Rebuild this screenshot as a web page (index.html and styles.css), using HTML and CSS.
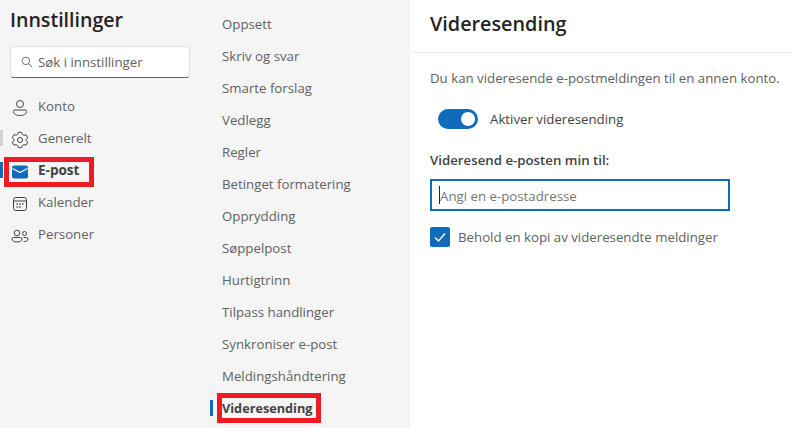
FILE: index.html
```html
<!DOCTYPE html>
<html lang="nb">
<head>
  <meta charset="UTF-8" />
  <title>Innstillinger</title>
  <link rel="stylesheet" href="styles.css">
</head>
<body>
  <div class="settings">

    <!-- Left column -->
    <aside class="sidebar">
      <h1 class="sidebar-title">Innstillinger</h1>
      <div class="search">
        <svg class="search-icon" viewBox="0 0 16 16" width="12" height="12" fill="none" stroke="#616161" stroke-width="1.200">
          <circle cx="6.500" cy="6.500" r="5"/>
          <path d="M10 10l5 5"/>
        </svg>
        <span>Søk i innstillinger</span>
      </div>
      <nav class="cat-list">
        <div class="cat">
          <svg viewBox="0 0 20 20" width="20" height="20" fill="none" stroke="#424242" stroke-width="1">
            <circle cx="10" cy="6" r="3.500"/>
            <path d="M3.500 13.500a1.500 1.500 0 0 1 1.500-1.500h10a1.500 1.500 0 0 1 1.500 1.500c0 2.800-3 4-6.500 4s-6.500-1.200-6.500-4z"/>
          </svg>
          <span>Konto</span>
        </div>
        <div class="cat cat-hover">
          <svg viewBox="0 0 20 20" width="20" height="20" fill="none" stroke="#424242" stroke-width="1">
            <circle cx="10" cy="10" r="2.500"/>
            <path d="M8.300 2.300h3.400l.6 2.200 1.500.9 2.200-.6 1.700 3-1.600 1.600v1.200l1.600 1.600-1.700 3-2.200-.6-1.500.9-.6 2.200H8.300l-.6-2.200-1.500-.9-2.200.6-1.700-3 1.600-1.600V9.200L2.300 7.600l1.700-3 2.200.6 1.500-.9z" stroke-linejoin="round"/>
          </svg>
          <span>Generelt</span>
        </div>
        <div class="cat cat-active">
          <svg viewBox="0 0 20 20" width="20" height="20">
            <rect x="2" y="3.500" width="16" height="13" rx="2" fill="#0f6cbd"/>
            <path d="M2.500 6.500 10 10.500l7.500-4" fill="none" stroke="#fff" stroke-width="1.200"/>
          </svg>
          <span>E-post</span>
        </div>
        <div class="cat">
          <svg viewBox="0 0 20 20" width="20" height="20" fill="none" stroke="#424242" stroke-width="1">
            <rect x="3.500" y="3.500" width="13" height="13" rx="2"/>
            <path d="M3.500 7h13"/>
            <path d="M6.500 10h1.400M9.300 10h1.400M12.100 10h1.400M6.500 13h1.400M9.300 13h1.400" stroke-width="1.400"/>
          </svg>
          <span>Kalender</span>
        </div>
        <div class="cat">
          <svg viewBox="0 0 20 20" width="20" height="20" fill="none" stroke="#424242" stroke-width="1">
            <circle cx="7" cy="7" r="2.800"/>
            <circle cx="14.500" cy="7.500" r="2"/>
            <path d="M2 13a1.500 1.500 0 0 1 1.500-1.500h7A1.500 1.500 0 0 1 12 13c0 2-2 3-5 3s-5-1-5-3z"/>
            <path d="M13.500 15.500c2.500.2 4.500-.7 4.500-2.500a1.500 1.500 0 0 0-1.500-1.500h-3"/>
          </svg>
          <span>Personer</span>
        </div>
      </nav>
      <div class="mark mark-epost"></div>
    </aside>

    <!-- Middle column -->
    <nav class="sub-list">
      <div class="sub">Oppsett</div>
      <div class="sub">Skriv og svar</div>
      <div class="sub">Smarte forslag</div>
      <div class="sub">Vedlegg</div>
      <div class="sub">Regler</div>
      <div class="sub">Betinget formatering</div>
      <div class="sub">Opprydding</div>
      <div class="sub">Søppelpost</div>
      <div class="sub">Hurtigtrinn</div>
      <div class="sub">Tilpass handlinger</div>
      <div class="sub">Synkroniser e-post</div>
      <div class="sub">Meldingshåndtering</div>
      <div class="sub sub-active">Videresending</div>
      <div class="mark mark-videre"></div>
    </nav>

    <!-- Right column -->
    <main class="panel">
      <header class="panel-head">
        <h2>Videresending</h2>
      </header>
      <div class="panel-body">
        <p class="intro">Du kan videresende e-postmeldingen til en annen konto.</p>
        <div class="toggle-row">
          <span class="toggle"><span class="knob"></span></span>
          <span>Aktiver videresending</span>
        </div>
        <div class="field-label">Videresend e-posten min til:</div>
        <div class="input"><span class="caret"></span><span class="placeholder">Angi en e-postadresse</span></div>
        <div class="check-row">
          <span class="check">
            <svg viewBox="0 0 20 20" width="20" height="20" fill="none" stroke="#fff" stroke-width="1.500">
              <path d="M5 10.500 8.500 14 15 6.500"/>
            </svg>
          </span>
          <span>Behold en kopi av videresendte meldinger</span>
        </div>
      </div>
    </main>

  </div>
</body>
</html>
```

FILE: styles.css
```css
*, *::before, *::after { box-sizing: border-box; }
html, body {
  margin: 0;
  height: 100%;
  overflow: hidden;
  font-family: "Open Sans", "Noto Sans", sans-serif;
  font-size: 13.25px;
  color: #424242;
  background: #fff;
}

.settings {
  display: flex;
  height: 428px;
}

/* ---------- left column ---------- */
.sidebar {
  position: relative;
  width: 210px;
  background: #f5f5f5;
  border-right: 1px solid #f0f0f0;
  padding: 0 0 0 10px;
}
.sidebar-title {
  margin: 0;
  height: 46px;
  line-height: 39px;
  font-size: 19.6px;
  font-weight: 600;
  color: #242424;
}
.search {
  display: flex;
  align-items: center;
  gap: 5px;
  width: 180px;
  height: 32px;
  padding-left: 10px;
  background: #fff;
  border: 1px solid #e0e0e0;
  border-bottom-color: #616161;
  border-radius: 4px;
  color: #616161;
}
.cat-list { margin-top: 12px; }
.cat {
  position: relative;
  display: flex;
  align-items: center;
  gap: 8px;
  height: 32px;
  color: #616161;
}
.cat svg { margin-top: 3px; }
.cat-hover::before,
.cat-active::before {
  content: "";
  position: absolute;
  left: -10px;
  top: 8px;
  width: 3px;
  height: 16px;
  background: #d1d1d1;
}
.cat-active::before { background: #0f6cbd; }
.cat-active { font-weight: 700; color: #424242; font-size: 13.5px; }

/* ---------- middle column ---------- */
.sub-list {
  position: relative;
  width: 200px;
  background: #f5f5f5;
  padding: 8px 0 0 12px;
}
.sub {
  position: relative;
  height: 32px;
  line-height: 32px;
  color: #616161;
}
.sub-active { font-weight: 700; color: #424242; font-size: 12.7px; }
.sub-active::before {
  content: "";
  position: absolute;
  left: -12px;
  top: 8px;
  width: 3px;
  height: 16px;
  background: #0f6cbd;
}

/* red annotation boxes */
.mark {
  position: absolute;
  border: 5px solid #ed1c24;
}
.mark-epost { left: 4px; top: 157px; width: 90px; height: 30px; }
.mark-videre { left: 7px; top: 393px; width: 104px; height: 30px; }

/* ---------- right column ---------- */
.panel { flex: 1; background: #fff; }
.panel-head {
  height: 53px;
  padding-left: 20px;
  border-bottom: 1px solid #f0f0f0;
}
.panel-head h2 {
  margin: 0;
  line-height: 47px;
  font-size: 19.8px;
  font-weight: 600;
  color: #242424;
}
.panel-body { padding: 0 0 0 20px; }
.intro { margin: 15px 0 0; line-height: 20px; color: #616161; }
.toggle-row {
  display: flex;
  align-items: center;
  gap: 12px;
  margin: 21px 0 0 8px;
  height: 20px;
}
.toggle {
  display: flex;
  align-items: center;
  justify-content: flex-end;
  width: 40px;
  height: 20px;
  padding-right: 3px;
  border-radius: 10px;
  background: #0f6cbd;
}
.knob {
  width: 14px;
  height: 14px;
  border-radius: 50%;
  background: #fff;
}
.field-label {
  margin-top: 21px;
  line-height: 20px;
  font-weight: 600;
}
.input {
  display: flex;
  align-items: center;
  width: 300px;
  height: 32px;
  margin-top: 9px;
  padding-left: 7px;
  border: 2px solid #0f6cbd;
  color: #757575;
}
.placeholder { padding-top: 1px; }
.caret {
  width: 1px;
  height: 18px;
  background: #242424;
}
.check-row {
  display: flex;
  align-items: center;
  gap: 8px;
  height: 20px;
  margin-top: 16px;
  color: #616161;
}
.check {
  width: 20px;
  height: 20px;
  border-radius: 2px;
  background: #0f6cbd;
}
.check svg { display: block; }
```
